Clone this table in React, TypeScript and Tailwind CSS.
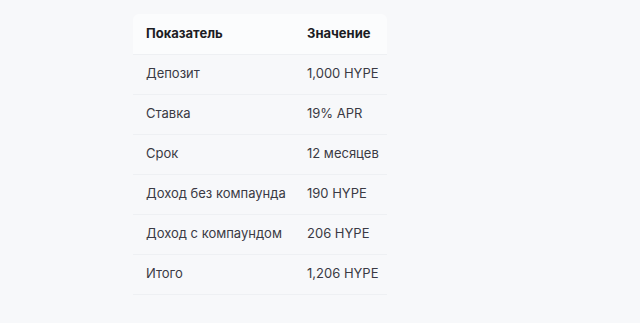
import React from "react";

const rows: [string, string][] = [
  ["Депозит", "1,000 HYPE"],
  ["Ставка", "19% APR"],
  ["Срок", "12 месяцев"],
  ["Доход без компаунда", "190 HYPE"],
  ["Доход с компаундом", "206 HYPE"],
  ["Итого", "1,206 HYPE"],
];

export default function App() {
  return (
    <div
      className="min-h-[323px] w-full bg-[#f7f8fa] pt-[14px] pl-[133px]"
      style={{ fontFamily: "Inter, 'Noto Sans', sans-serif" }}
    >
      <table className="w-[254px] border-collapse text-[13px]">
        <thead>
          <tr className="h-[40px] bg-[#fbfcfd] border-b border-[#eef0f3]">
            <th className="w-[161px] rounded-tl-md pl-[13px] text-left font-bold text-[#1c1c24]">
              Показатель
            </th>
            <th className="rounded-tr-md pl-[13px] text-left font-bold text-[#1c1c24]">
              Значение
            </th>
          </tr>
        </thead>
        <tbody>
          {rows.map(([k, v]) => (
            <tr key={k} className="h-[40px] border-b border-[#eef0f3]">
              <td className="pl-[13px] text-[#3a3a44]">{k}</td>
              <td className="pl-[13px] text-[#3a3a44]">{v}</td>
            </tr>
          ))}
        </tbody>
      </table>
    </div>
  );
}
